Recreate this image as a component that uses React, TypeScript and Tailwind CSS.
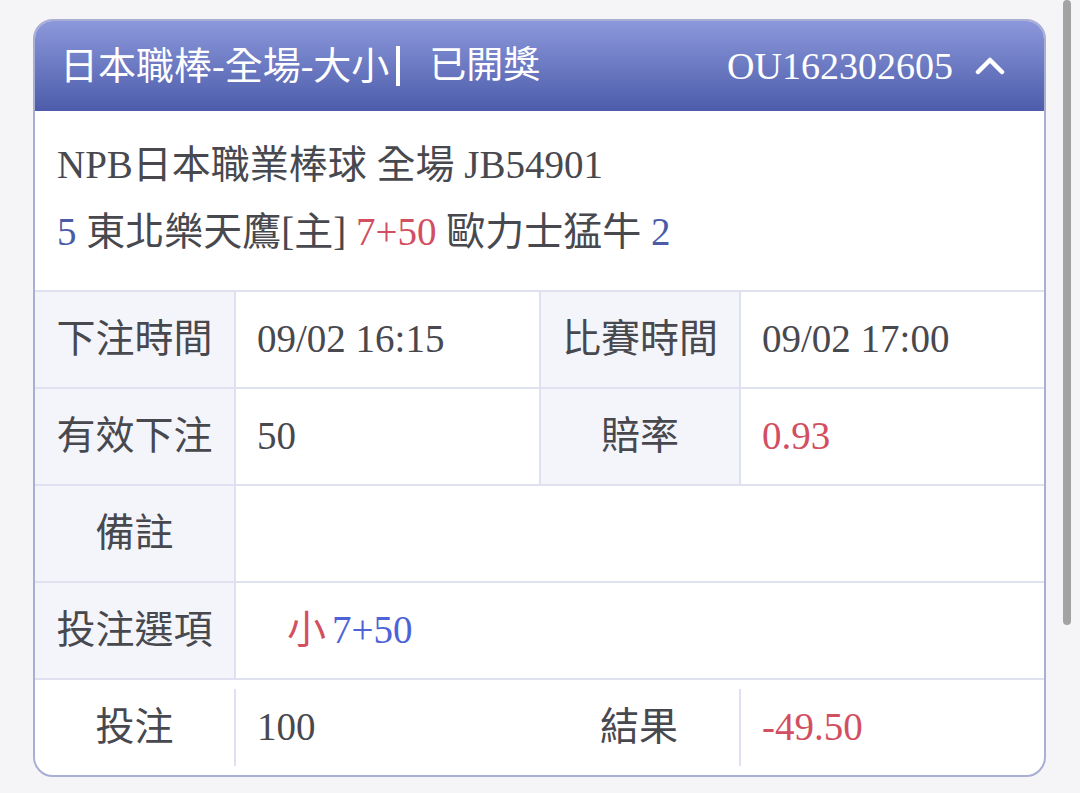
const font = { fontFamily: '"Liberation Serif", "Noto Sans CJK TC", serif' };

const Label = ({ text, width }: { text: string; width: string }) => (
  <div className={`${width} h-full shrink-0 flex items-center justify-center bg-[#f4f5fb] border-r-2 border-[#dfe1f0]`}>
    {text}
  </div>
);

export default function App() {
  return (
    <div className="min-h-screen bg-[#f5f5f7] relative text-[39px] text-[#48484f]" style={font}>
      {/* scroll indicator */}
      <div className="absolute right-[9px] top-0 w-[8px] h-[625px] rounded-full bg-[#a3a3a3]" />

      <div className="pt-[19px] pl-[33px]">
        <div className="w-[1013px] rounded-[20px] border-2 border-[#a9aed4] overflow-hidden bg-white">
          {/* Header */}
          <div className="h-[90px] flex items-center justify-between pl-[25px] pr-[39px] bg-gradient-to-b from-[#8c98db] to-[#4d5caa] text-white text-[38px]">
            <div className="flex items-center">
              <span>日本職棒-全場-大小</span>
              <span className="ml-[7px] w-[4px] h-[40px] bg-white" />
              <span className="ml-[29px] text-[37px]">已開獎</span>
            </div>
            <div className="flex items-center gap-[22px]">
              <span>OU162302605</span>
              <svg width="30" height="20" viewBox="0 0 30 20" fill="none">
                <polyline points="3,16 15,4 27,16" stroke="white" strokeWidth="4.5" strokeLinecap="round" strokeLinejoin="round" />
              </svg>
            </div>
          </div>

          {/* Match info */}
          <div className="h-[179px] pt-[20px] pl-[22px] leading-[67px]">
            <div>NPB日本職業棒球 全場 JB54901</div>
            <div>
              <span className="text-[#4b5ba8]">5</span> 東北樂天鷹[主] <span className="text-[#d24f61]">7+50</span> 歐力士猛牛{' '}
              <span className="text-[#4b5ba8]">2</span>
            </div>
          </div>

          {/* Rows */}
          <div className="h-[97px] flex border-t-2 border-[#dfe1f0]">
            <Label text="下注時間" width="w-[201px]" />
            <div className="w-[305px] h-full shrink-0 flex items-center pl-[21px] border-r-2 border-[#dfe1f0]">09/02 16:15</div>
            <Label text="比賽時間" width="w-[200px]" />
            <div className="flex-1 flex items-center pl-[21px]">09/02 17:00</div>
          </div>

          <div className="h-[97px] flex border-t-2 border-[#dfe1f0]">
            <Label text="有效下注" width="w-[201px]" />
            <div className="w-[305px] h-full shrink-0 flex items-center pl-[21px] border-r-2 border-[#dfe1f0]">50</div>
            <Label text="賠率" width="w-[200px]" />
            <div className="flex-1 flex items-center pl-[21px] text-[#d24f61]">0.93</div>
          </div>

          <div className="h-[97px] flex border-t-2 border-[#dfe1f0]">
            <Label text="備註" width="w-[201px]" />
            <div className="flex-1" />
          </div>

          <div className="h-[97px] flex border-t-2 border-[#dfe1f0]">
            <Label text="投注選項" width="w-[201px]" />
            <div className="flex-1 flex items-center pl-[51px]">
              <span className="text-[#d24f61]">小</span>
              <span className="ml-[6px] text-[#4d63d6]">7+50</span>
            </div>
          </div>

          <div className="h-[97px] flex items-center border-t-2 border-[#dfe1f0]">
            <div className="w-[199px] text-center">投注</div>
            <div className="w-[2px] h-[77px] bg-[#dfe1f0]" />
            <div className="w-[303px] pl-[21px]">100</div>
            <div className="w-[200px] text-center">結果</div>
            <div className="w-[2px] h-[77px] bg-[#dfe1f0]" />
            <div className="flex-1 pl-[21px] text-[#d24f61]">-49.50</div>
          </div>
        </div>
      </div>
    </div>
  );
}
